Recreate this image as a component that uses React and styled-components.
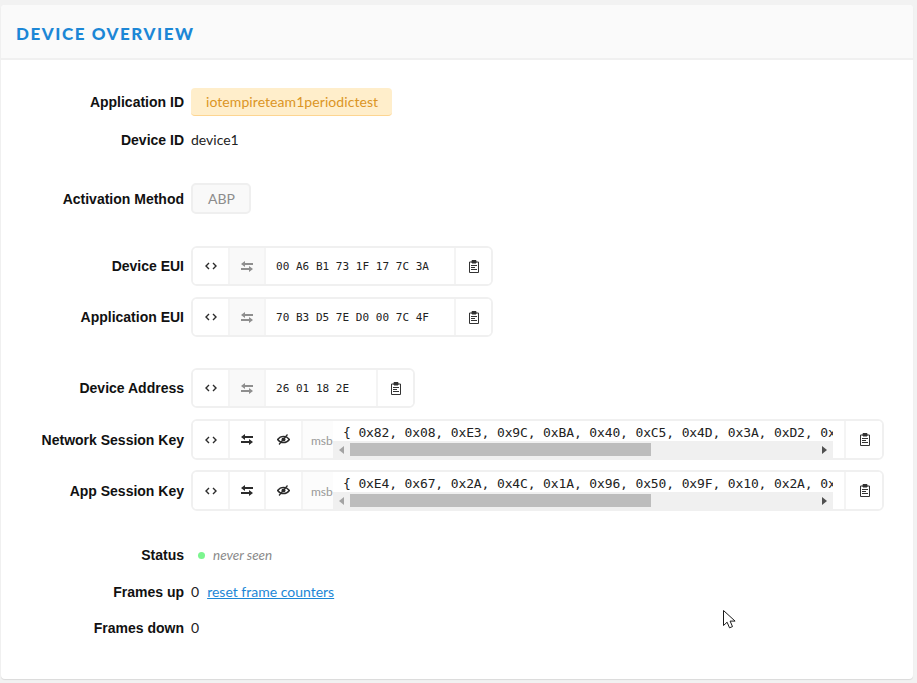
import React from 'react';
import styled, { createGlobalStyle } from 'styled-components';

const GlobalStyles = createGlobalStyle`
  * {
    box-sizing: border-box;
  }

  html, body {
    margin: 0;
    height: 100%;
    overflow: hidden;
    background: #f2f2f2;
    font-family: 'Lato', 'Liberation Sans', sans-serif;
    font-size: 14px;
    color: #222;
  }
`;

const Page = styled.div`
  position: relative;
  height: 683px;
  padding: 5px 4px 4px 1px;
`;

const Card = styled.section`
  height: 100%;
  background: #fff;
  border-radius: 4px;
  box-shadow: 0 1px 1px rgba(0, 0, 0, 0.1);
  overflow: hidden;
`;

const Header = styled.header`
  height: 55px;
  padding: 3px 0 0 15px;
  display: flex;
  align-items: center;
  background: #fafafa;
  border-bottom: 2px solid #f0f0f0;
`;

const Title = styled.h1`
  margin: 0;
  font-family: 'Lato', sans-serif;
  font-size: 17px;
  font-weight: 900;
  letter-spacing: 1.55px;
  color: #1c87d6;
`;

const Body = styled.div`
  padding-top: 28px;
`;

const Row = styled.div`
  display: flex;
  align-items: center;
  gap: 7px;
  min-height: ${(p) => p.$height || 28}px;
  margin-top: ${(p) => p.$top || 0}px;
`;

const Label = styled.div`
  width: 183px;
  flex: none;
  text-align: right;
  font-family: 'Liberation Sans', sans-serif;
  font-size: 14px;
  font-weight: 700;
  color: #111;
`;

const Value = styled.span`
  margin-top: -1px;
  color: #222;
`;

const AppTag = styled.span`
  height: 28px;
  padding: 0 14px 0 15px;
  display: flex;
  align-items: center;
  background: #ffeecb;
  border-bottom: 1px solid #fdd591;
  border-radius: 4px;
  letter-spacing: 0.07px;
  color: #db9525;
`;

const MethodTag = styled.span`
  height: 31px;
  padding: 0 14px 0 15px;
  display: flex;
  align-items: center;
  background: #f9f9f9;
  border: 2px solid #efefef;
  border-radius: 5px;
  color: #8c8c8c;
`;

const ByteBox = styled.div`
  display: flex;
  height: ${(p) => (p.$wide ? 41 : 40)}px;
  width: ${(p) => p.$width}px;
  border: 2px solid #f0f0f0;
  border-radius: 6px;
  background: #fff;
  overflow: hidden;
`;

const Cell = styled.div`
  width: ${(p) => p.$width || 36}px;
  flex: none;
  display: flex;
  align-items: center;
  justify-content: center;
  border-right: ${(p) => (p.$last ? 0 : '2px solid #f4f4f4')};
  background: ${(p) => (p.$muted ? '#f9f9f9' : '#fff')};
  color: ${(p) => (p.$muted ? '#8f8f8f' : '#2b2b2b')};
`;

const Bytes = styled.div`
  flex: 1;
  padding-left: 10px;
  display: flex;
  align-items: center;
  border-right: 2px solid #f4f4f4;
  font-family: 'DejaVu Sans Mono', monospace;
  font-size: 11px;
  letter-spacing: 0.03px;
  color: #222;
`;

const Order = styled.div`
  width: 30px;
  flex: none;
  padding-left: 8px;
  padding-top: 1px;
  display: flex;
  align-items: center;
  background: #fcfcfc;
  font-size: 12px;
  color: #999;
`;

const KeyArea = styled.div`
  width: 500px;
  flex: none;
  display: flex;
  flex-direction: column;
  justify-content: space-between;
`;

const KeyText = styled.div`
  height: 20px;
  padding: 3px 0 0 10px;
  overflow: hidden;
  white-space: pre;
  line-height: 18px;
  font-family: 'DejaVu Sans Mono', monospace;
  font-size: 13px;
  letter-spacing: -0.13px;
  color: #222;
`;

const ScrollTrack = styled.div`
  height: 17px;
  display: flex;
  align-items: center;
  background: #f0f0f0;
`;

const ScrollArrow = styled.span`
  width: 17px;
  flex: none;
  display: flex;
  justify-content: center;
  color: ${(p) => (p.$dim ? '#a3a3a3' : '#505050')};
`;

const ScrollSlot = styled.div`
  flex: 1;
  height: 13px;
`;

const ScrollThumb = styled.div`
  height: 100%;
  background: #bdbdbd;
`;

const Spacer = styled.div`
  width: 13px;
  flex: none;
  border-right: 2px solid #f4f4f4;
`;

const StatusWrap = styled.div`
  display: flex;
  align-items: center;
  padding-left: 7px;
  gap: 8px;
`;

const Dot = styled.span`
  width: 7px;
  height: 7px;
  border-radius: 50%;
  background: #7cf58f;
`;

const Muted = styled.em`
  font-size: 13.5px;
  color: #8a8a8a;
`;

const ResetLink = styled.a`
  margin: -1px 0 0 1px;
  color: #1c87d6;
  text-decoration: underline;
  font-size: 14px;
`;

const Cursor = styled.svg`
  position: absolute;
  left: 723px;
  top: 610px;
`;

const CodeIcon = () => (
  <svg width="12" height="8" viewBox="0 0 12 8" fill="none" stroke="currentColor" strokeWidth="1.4">
    <path d="M4 1 1 4l3 3M8 1l3 3-3 3" />
  </svg>
);

const SwapIcon = () => (
  <svg width="12" height="11" viewBox="0 0 12 11" fill="currentColor">
    <path d="M12 2H4V0L0 3l4 3V4h8zM0 7h8V5l4 3-4 3V9H0z" />
  </svg>
);

const EyeSlashIcon = () => (
  <svg width="13" height="11" viewBox="0 0 13 11" fill="none" stroke="currentColor">
    <path d="M.6 5.5C2.2 3.4 4.2 2.4 6.5 2.4s4.3 1 5.9 3.1C10.8 7.6 8.8 8.6 6.5 8.6S2.2 7.6.6 5.5z" strokeWidth="1.4" />
    <circle cx="6.5" cy="5.5" r="2" fill="currentColor" stroke="none" />
    <path d="M10.5.5 2 10.5" strokeWidth="1.2" />
  </svg>
);

const ClipboardIcon = () => (
  <svg width="10" height="13" viewBox="0 0 10 13" fill="none" stroke="#333">
    <path d="M.5 2h9v10.5h-9z" strokeWidth="1" />
    <path d="M3 .5h4V3H3z" fill="#333" strokeWidth="1" />
    <path d="M2 5.5h6M2 7.5h4M2 9.5h6" strokeWidth="1" />
  </svg>
);

const TriangleLeft = () => (
  <svg width="5" height="8" viewBox="0 0 5 8" fill="currentColor">
    <path d="M5 0 0 4l5 4z" />
  </svg>
);

const TriangleRight = () => (
  <svg width="5" height="8" viewBox="0 0 5 8" fill="currentColor">
    <path d="M0 0l5 4-5 4z" />
  </svg>
);

const KeyRow = ({ label, top, text }) => (
  <Row $height={41} $top={top}>
    <Label>{label}</Label>
    <ByteBox $wide $width={693}>
      <Cell $width={37}><CodeIcon /></Cell>
      <Cell><SwapIcon /></Cell>
      <Cell $width={37}><EyeSlashIcon /></Cell>
      <Order>msb</Order>
      <KeyArea>
        <KeyText>{text}</KeyText>
        <ScrollTrack>
          <ScrollArrow $dim><TriangleLeft /></ScrollArrow>
          <ScrollSlot>
            <ScrollThumb style={{ width: `${(301 / 466) * 100}%` }} />
          </ScrollSlot>
          <ScrollArrow><TriangleRight /></ScrollArrow>
        </ScrollTrack>
      </KeyArea>
      <Spacer />
      <Cell $last $width={37}><ClipboardIcon /></Cell>
    </ByteBox>
  </Row>
);

const EuiRow = ({ label, value, width, top }) => (
  <Row $height={40} $top={top}>
    <Label>{label}</Label>
    <ByteBox $width={width}>
      <Cell $width={37}><CodeIcon /></Cell>
      <Cell $muted><SwapIcon /></Cell>
      <Bytes>{value}</Bytes>
      <Cell $last $width={35}><ClipboardIcon /></Cell>
    </ByteBox>
  </Row>
);

const App = () => (
  <>
    <GlobalStyles />
    <Page>
      <Card>
        <Header>
          <Title>DEVICE OVERVIEW</Title>
        </Header>
        <Body>
          <Row>
            <Label>Application ID</Label>
            <AppTag>iotempireteam1periodictest</AppTag>
          </Row>
          <Row $top={10}>
            <Label>Device ID</Label>
            <Value>device1</Value>
          </Row>
          <Row $height={31} $top={29}>
            <Label>Activation Method</Label>
            <MethodTag>ABP</MethodTag>
          </Row>
          <EuiRow label="Device EUI" value="00 A6 B1 73 1F 17 7C 3A" width={302} top={32} />
          <EuiRow label="Application EUI" value="70 B3 D5 7E D0 00 7C 4F" width={302} top={11} />
          <EuiRow label="Device Address" value="26 01 18 2E" width={224} top={31} />
          <KeyRow label="Network Session Key" top={11} text="{ 0x82, 0x08, 0xE3, 0x9C, 0xBA, 0x40, 0xC5, 0x4D, 0x3A, 0xD2, 0x" />
          <KeyRow label="App Session Key" top={10} text="{ 0xE4, 0x67, 0x2A, 0x4C, 0x1A, 0x96, 0x50, 0x9F, 0x10, 0x2A, 0x" />
          <Row $height={20} $top={34}>
            <Label>Status</Label>
            <StatusWrap>
              <Dot />
              <Muted>never seen</Muted>
            </StatusWrap>
          </Row>
          <Row $height={20} $top={17}>
            <Label>Frames up</Label>
            <Value>0</Value>
            <ResetLink href="#">reset frame counters</ResetLink>
          </Row>
          <Row $height={20} $top={16}>
            <Label>Frames down</Label>
            <Value>0</Value>
          </Row>
        </Body>
      </Card>
      <Cursor width="14" height="20" viewBox="0 0 14 20">
        <path d="M.5.5v15l3.6-3.3 2.4 5.6 3-1.2-2.4-5.5h5z" fill="#fff" stroke="#1a1a1a" strokeWidth="1" />
      </Cursor>
    </Page>
  </>
);

export default App;
